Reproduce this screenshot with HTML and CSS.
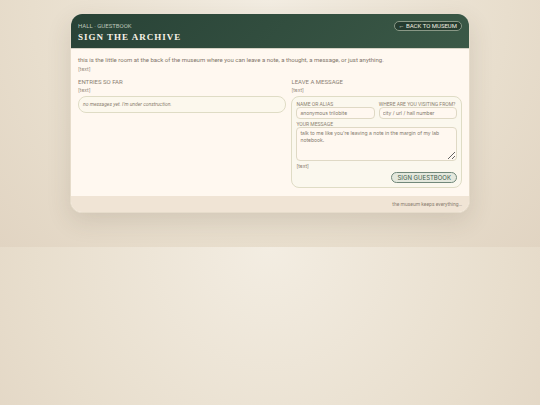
FILE: index.html
```html
<!DOCTYPE html>
<html lang="en">
<head>
    <meta charset="UTF-8">
    <meta name="viewport" content="width=device-width, initial-scale=1.0">
    <title>Guestbook</title>
    <link rel="stylesheet" href="styles.css">
</head>
<body>
    <main class="card">
        <header class="card-header">
            <div>
                <p class="eyebrow">Hall · Guestbook</p>
                <h1 class="title">Sign the Archive</h1>
            </div>
            <a class="back-link" href="#">← Back to museum</a>
        </header>

        <div class="card-body">
            <p class="intro">this is the little room at the back of the museum where you can leave a note, a thought, a message, or just anything.</p>
            <p class="note">[text]</p>

            <div class="columns">
                <section>
                    <h2 class="section-title">Entries so far</h2>
                    <p class="note">[text]</p>
                    <div class="empty">no messages yet. I'm under construction.</div>
                </section>

                <section>
                    <h2 class="section-title">Leave a message</h2>
                    <p class="note">[text]</p>
                    <form class="form">
                        <div class="form-row">
                            <div class="field">
                                <label for="name">Name or alias</label>
                                <input id="name" type="text" placeholder="anonymous trilobite">
                            </div>
                            <div class="field">
                                <label for="from">Where are you visiting from?</label>
                                <input id="from" type="text" placeholder="city / url / hall number">
                            </div>
                        </div>
                        <div class="field">
                            <label for="message">Your message</label>
                            <textarea id="message" placeholder="talk to me like you're leaving a note in the margin of my lab notebook."></textarea>
                        </div>
                        <p class="form-note">[text]</p>
                        <button class="submit" type="button">Sign guestbook</button>
                    </form>
                </section>
            </div>
        </div>

        <footer class="card-footer">the museum keeps everything…</footer>
    </main>
</body>
</html>
```

FILE: styles.css
```css
* {
    box-sizing: border-box;
}
body {
    margin: 0;
    padding: 14px 14px 34px;
    font-family: "Roboto", "Liberation Sans", sans-serif;
    font-size: 5px;
    color: #8b7f70;
    background: radial-gradient(circle at top, #f3ede2 0%, #e8decd 65%, #e1d4c2 100%);
}
p, h1, h2 {
    margin: 0;
}
.card {
    max-width: 400px;
    margin: 0 auto;
    overflow: hidden;
    border: 1px solid #e6dccb;
    border-top: none;
    border-radius: 12px;
    background: #fff8f0;
    box-shadow: 0 8px 24px rgba(70, 60, 40, 0.14);
}
.card-header {
    display: flex;
    justify-content: space-between;
    align-items: flex-start;
    padding: 7px 7px 5px;
    color: #f8f2e6;
    background: linear-gradient(135deg, #284236, #3b5947);
    border-bottom: 1px solid #d5d2c4;
}
.eyebrow {
    font-size: 6px;
    line-height: 10px;
    text-transform: uppercase;
    color: #bec6b9;
}
.title {
    font-family: "Liberation Serif", serif;
    font-size: 9px;
    line-height: 12px;
    font-weight: 700;
    letter-spacing: 1px;
    text-transform: uppercase;
}
.back-link {
    padding: 0 4px;
    border: 1px solid #899886;
    border-radius: 6px;
    background: #263c30;
    color: #f0eee0;
    font-size: 6px;
    line-height: 8px;
    text-transform: uppercase;
    text-decoration: none;
}
.card-body {
    padding: 6px 7px 8px;
}
.intro {
    font-size: 6px;
    line-height: 10px;
    color: #82766a;
}
.note {
    font-family: "Inter", sans-serif;
    line-height: 9px;
    color: #978b7c;
}
.columns {
    display: grid;
    grid-template-columns: 11fr 9fr;
    gap: 5px;
    padding-top: 4px;
}
.section-title {
    font-size: 6px;
    line-height: 8px;
    font-weight: 400;
    text-transform: uppercase;
    color: #8b8073;
}
.empty {
    margin-top: 1px;
    padding: 2px 4px;
    border: 1px solid #dfdcc5;
    border-radius: 8px;
    background: #fcf8ed;
    line-height: 11px;
    font-style: italic;
}
.form {
    display: flex;
    flex-direction: column;
    gap: 2px;
    margin-top: 1px;
    padding: 4px;
    border: 1px solid #dfdcc5;
    border-radius: 8px;
    background: #fbf8ee;
}
.form-row {
    display: grid;
    grid-template-columns: 1fr 1fr;
    gap: 4px;
}
.field {
    display: flex;
    flex-direction: column;
    min-width: 0;
}
.field label {
    font-size: 5px;
    line-height: 6px;
    text-transform: uppercase;
    white-space: nowrap;
}
.field input,
.field textarea {
    width: 100%;
    margin: 0;
    padding: 2px 3px;
    border: 1px solid #dfd9c5;
    border-radius: 4px;
    background: #fff8f0;
    font-family: "Inter", sans-serif;
    font-size: 5px;
    line-height: 7px;
}
.field input {
    height: 12px;
}
.field textarea {
    height: 34px;
    resize: vertical;
}
.field ::placeholder {
    color: #82786c;
}
.form-note {
    font-family: "Inter", sans-serif;
    line-height: 7px;
}
.submit {
    align-self: flex-end;
    padding: 0 5px;
    border: 1px solid #71887a;
    border-radius: 6px;
    background: #e4e8dd;
    color: #405b4a;
    font-family: "Inter", sans-serif;
    font-size: 6px;
    line-height: 9px;
    text-transform: uppercase;
}
.card-footer {
    padding: 4px 7px;
    background: #f0e4d5;
    line-height: 8px;
    text-align: right;
}
```
